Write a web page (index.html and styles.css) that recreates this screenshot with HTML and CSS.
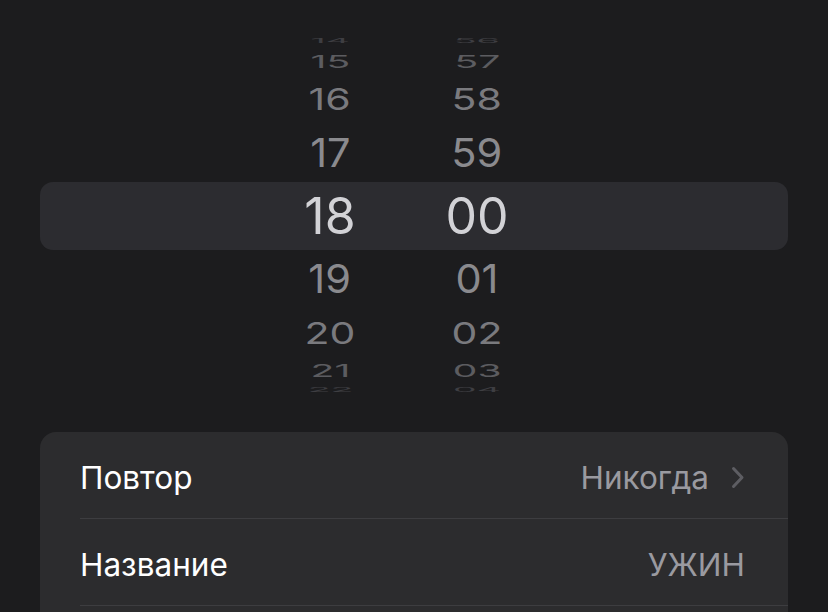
FILE: index.html
```html
<!DOCTYPE html>
<html lang="ru">
<head>
<meta charset="utf-8">
<title>Будильник</title>
<link rel="stylesheet" href="styles.css">
</head>
<body>
<div class="screen">
  <div class="picker">
    <div class="highlight"></div>
    <div class="column">
      <div class="cell d4"><span>14</span></div>
      <div class="cell d3a"><span>15</span></div>
      <div class="cell d2"><span>16</span></div>
      <div class="cell d1"><span>17</span></div>
      <div class="cell d0"><span>18</span></div>
      <div class="cell d1"><span>19</span></div>
      <div class="cell d2"><span>20</span></div>
      <div class="cell d3b"><span>21</span></div>
      <div class="cell d4b"><span>22</span></div>
    </div>
    <div class="column">
      <div class="cell d4"><span>56</span></div>
      <div class="cell d3a"><span>57</span></div>
      <div class="cell d2"><span>58</span></div>
      <div class="cell d1"><span>59</span></div>
      <div class="cell d0"><span>00</span></div>
      <div class="cell d1"><span>01</span></div>
      <div class="cell d2"><span>02</span></div>
      <div class="cell d3b"><span>03</span></div>
      <div class="cell d4b"><span>04</span></div>
    </div>
  </div>

  <div class="card">
    <div class="row">
      <span class="label">Повтор</span>
      <span class="value">Никогда
        <svg class="chevron" width="14" height="23" viewBox="0 0 14 23"><path d="M2.5 2.5 L11 11.5 L2.5 20.5" fill="none" stroke="#5d5d62" stroke-width="3" stroke-linecap="round" stroke-linejoin="round"/></svg>
      </span>
    </div>
    <div class="row">
      <span class="label">Название</span>
      <span class="value">УЖИН</span>
    </div>
  </div>
</div>
</body>
</html>
```

FILE: styles.css
```css
html, body {
  margin: 0;
  padding: 0;
  background: #1c1c1e;
  overflow: hidden;
}

.screen {
  width: 828px;
  height: 612px;
  overflow: hidden;
  font-family: "Inter", "Noto Sans", "Liberation Sans", sans-serif;
}

.picker {
  position: relative;
  margin-top: 31px;
  height: 366px;
  display: flex;
  padding-left: 280px;
  gap: 47px;
}

.highlight {
  position: absolute;
  left: 40px;
  right: 40px;
  top: 151px;
  height: 68px;
  background: #2c2c30;
  border-radius: 13px;
}

.column {
  position: relative;
  width: 100px;
  display: flex;
  flex-direction: column;
}

.cell {
  display: flex;
  align-items: center;
  justify-content: center;
  font-size: 50px;
  overflow: visible;
}

.cell span {
  display: block;
  line-height: 1;
}

.d0 { height: 70px; color: #d2d2d6; }
.d1 { height: 56px; color: #8a8a8e; }
.d1 span { transform: scale(0.83, 0.8); }
.d2 { height: 52px; color: #7a7a7e; }
.d2 span { transform: scale(0.82, 0.6); }
.d3a { height: 22px; color: #5c5c60; }
.d3b { height: 24px; color: #5c5c60; }
.d3a span, .d3b span { transform: scale(0.78, 0.35); }
.d4 { height: 20px; color: #3e3e42; }
.d4b { height: 14px; color: #3e3e42; }
.d4 span, .d4b span { transform: scale(0.75, 0.13); }

.card {
  margin: 35px 40px 0;
  background: #2c2c2e;
  border-radius: 16px;
  height: 300px;
  overflow: hidden;
}

.row {
  margin-left: 40px;
  padding-right: 43px;
  padding-top: 4px;
  height: 82px;
  border-bottom: 1px solid #3d3d40;
  display: flex;
  align-items: center;
  justify-content: space-between;
  font-size: 31.5px;
}

.label {
  color: #ffffff;
}

.value {
  color: #9a9aa0;
  display: flex;
  align-items: center;
  gap: 22px;
}

.chevron {
  display: block;
}
```
